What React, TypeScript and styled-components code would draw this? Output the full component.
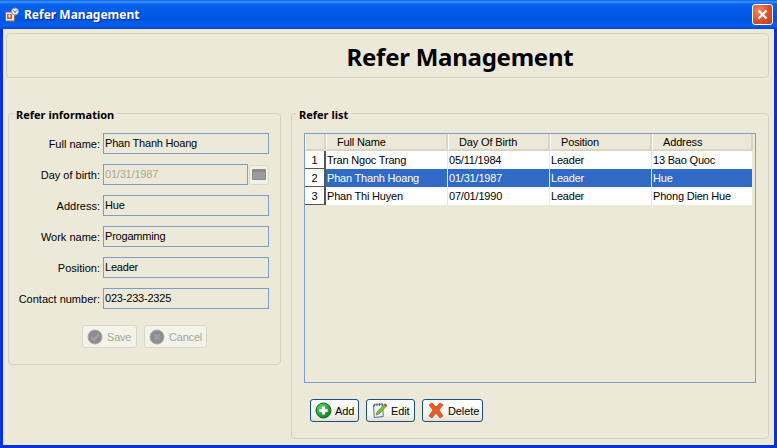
import React from "react";
import styled, { createGlobalStyle } from "styled-components";

const Global = createGlobalStyle`
  html, body { margin: 0; padding: 0; background: #ece9d8; }
  body { width: 777px; height: 448px; overflow: hidden; font-family: "Liberation Sans", Arial, sans-serif; font-size: 11px; color: #000; }
  * { box-sizing: border-box; }
`;

const Window = styled.div`
  width: 777px; height: 448px; display: flex; flex-direction: column;
  background: #0831d9;
`;
const TitleBar = styled.div`
  height: 29px; flex: none; display: flex; align-items: center; padding: 0 4px 0 5px; gap: 5px;
  background: linear-gradient(180deg, #0a5be0 0%, #3f93fb 6%, #0a63ee 14%, #0058e6 45%, #0055de 70%, #0060f2 88%, #0046c8 100%);
`;
const TitleText = styled.span`
  flex: 1; color: #fff; font-family: "Noto Sans", sans-serif; font-size: 12px; font-weight: 700; line-height: 14px;
  text-shadow: 1px 1px 0 #0a2f9a;
`;
const CloseButton = styled.div`
  width: 21px; height: 21px; border: 1px solid #fff; border-radius: 3px; display: flex; align-items: center; justify-content: center;
  background: radial-gradient(circle at 30% 30%, #ee8a6c, #d8502c 55%, #b83a18);
`;
const Frame = styled.div`
  flex: 1; margin: 0 3px 3px 3px; background: #ece9d8; padding: 4px 5px 7px 3px;
  display: flex; flex-direction: column; min-height: 0;
`;
const Banner = styled.div`
  height: 45px; flex: none; border: 1px solid #d4d1bf; border-radius: 4px; display: flex; align-items: center; justify-content: center;
  padding: 2px 0 0 145px;
`;
const Heading = styled.h1`
  margin: 0; font-family: "Noto Sans", sans-serif; font-size: 24px; font-weight: 700; line-height: 30px; letter-spacing: -0.25px;
`;
const Columns = styled.div`
  flex: 1; display: grid; grid-template-columns: 273px 478px; column-gap: 10px; padding: 35px 0 0 2px; align-items: start; min-height: 0;
`;
const Group = styled.section<{ $h: number }>`
  position: relative; height: ${p => p.$h}px; border: 1px solid #d4d1bf; border-radius: 4px;
`;
const Legend = styled.div`
  position: absolute; left: 4px; top: -6px; padding: 0 3px 0 3px; background: #ece9d8; font-family: "Noto Sans", sans-serif; font-weight: 700; font-size: 11px; line-height: 13px;
`;
const Form = styled.div`
  display: flex; flex-direction: column; gap: 10px; padding: 19px 11px 0 0;
`;
const Row = styled.div`
  display: flex; align-items: center; gap: 3px;
`;
const Label = styled.label`
  width: 91px; text-align: right; font-size: 11px; white-space: nowrap;
`;
const Field = styled.div<{ $off?: boolean }>`
  flex: 1; height: 21px; border: 1px solid #7b9dc9; padding: 0 1px; line-height: 18px; font-size: 11px; letter-spacing: -0.2px;
  color: ${p => (p.$off ? "#a9a793" : "#000")};
`;
const CalButton = styled.div`
  width: 20px; height: 20px; margin-left: -2px; border: 1px solid #dcdacb; border-radius: 3px; background: #f3f1e6; display: flex; align-items: center; justify-content: center;
`;
const Actions = styled.div`
  display: flex; justify-content: flex-start; gap: 7px; padding: 16px 0 0 73px;
`;
const DisabledButton = styled.div<{ $w: number }>`
  width: ${p => p.$w}px; height: 23px; display: flex; align-items: center; gap: 4px; padding-left: 4px; color: #a6a596; font-size: 11px; letter-spacing: -0.2px;
  background: #f4f3ea; border: 1px solid #d8d6c8; border-radius: 3px;
`;
const Table = styled.div`
  margin: 19px 12px 0 12px; height: 250px; border: 1px solid #7b9dc9; background: #ece9d8;
`;
const Cols = `21px 122px 102px 102px 101px`;
const HeaderRow = styled.div`
  display: grid; grid-template-columns: ${Cols}; height: 17px;
`;
const HeaderCell = styled.div<{ $pad: number }>`
  border-left: 1px solid #fff; border-right: 2px solid #d8d5c4; border-bottom: 2px solid #d8d5c4; padding: 1px 0 0 ${p => p.$pad}px; line-height: 14px; font-size: 11px; letter-spacing: -0.15px;
  background: #ebe8d7;
`;
const DataRow = styled.div`
  display: grid; grid-template-columns: ${Cols}; height: 18px; width: 448px;
`;
const RowNumber = styled.div`
  background: #fff; border-right: 2px solid #555; border-bottom: 1px solid #555; padding-top: 1px; text-align: center; line-height: 16px; font-size: 11px;
`;
const Cell = styled.div<{ $sel?: boolean }>`
  background: ${p => (p.$sel ? "#316ac5" : "#fff")}; color: ${p => (p.$sel ? "#fff" : "#000")};
  border-right: 1px solid #ece9d8; padding: 1px 0 0 1px; line-height: 16px; font-size: 11px; letter-spacing: -0.2px; white-space: nowrap; overflow: hidden;
`;
const Toolbar = styled.div`
  display: flex; gap: 7px; padding: 16px 0 0 18px;
`;
const ToolButton = styled.div<{ $w: number }>`
  width: ${p => p.$w}px; height: 23px; display: flex; align-items: center; gap: 3px; padding-left: 4px; font-size: 11px; letter-spacing: -0.1px;
  background: linear-gradient(180deg, #fff 0%, #f5f4ea 70%, #e4e1d2 100%); border: 1px solid #1c4f85; border-radius: 3px;
`;

const AppIcon = () => (
  <svg width="14" height="16" viewBox="0 0 14 16" style={{ flex: "none" }}>
    <rect x="0.5" y="5" width="9" height="9" fill="#f4e6d8" stroke="#7a6f70" />
    <rect x="2" y="7" width="5" height="5" fill="#e05a3a" />
    <path d="M3 9h3M4.5 7.5v3" stroke="#fff" />
    <circle cx="10" cy="4.5" r="3.5" fill="#e6eef8" stroke="#8098b8" />
    <path d="M8.5 3.5L10 5.5 11.5 3.5" stroke="#3a5a90" fill="none" />
  </svg>
);
const GrayCheck = () => (
  <svg width="16" height="16" viewBox="0 0 16 16">
    <circle cx="8" cy="8" r="7" fill="#8c8c8c" stroke="#a8a8a8" />
    <path d="M4.5 8.5L7 11l5-6" stroke="#a4a4a4" strokeWidth="2" fill="none" />
  </svg>
);
const GrayCross = () => (
  <svg width="16" height="16" viewBox="0 0 16 16">
    <circle cx="8" cy="8" r="7" fill="#8c8c8c" stroke="#a8a8a8" />
    <path d="M5 5l6 6M11 5l-6 6" stroke="#9e9e9e" strokeWidth="2" />
  </svg>
);
const AddIcon = () => (
  <svg width="17" height="17" viewBox="0 0 17 17">
    <defs>
      <radialGradient id="addBall" cx="35%" cy="30%" r="80%">
        <stop offset="0%" stopColor="#58d86a" />
        <stop offset="100%" stopColor="#0c7a20" />
      </radialGradient>
    </defs>
    <circle cx="8.5" cy="8.5" r="7.5" fill="url(#addBall)" stroke="#0c6a1e" />
    <path d="M8.5 4.5v8M4.5 8.5h8" stroke="#fff" strokeWidth="3" />
  </svg>
);
const EditIcon = () => (
  <svg width="17" height="17" viewBox="0 0 17 17">
    <path d="M2.5 3l9-1 .8 12.5-9 1z" fill="#eef3f8" stroke="#5c6f8c" />
    <path d="M3.5 1.5v3M6 1.2v3M8.5 1v3M11 .8v3" stroke="#5c6f8c" />
    <path d="M5 13l1-3 7-7.5 2 2-7 7.5z" fill="#7cc03a" stroke="#4f8a20" strokeWidth="0.7" />
    <path d="M13.5 2l2 2" stroke="#d8352a" strokeWidth="1.8" />
  </svg>
);
const DeleteIcon = () => (
  <svg width="18" height="17" viewBox="0 0 18 17">
    <path d="M2 3l3-2 4 4 4-4 3 2-4 5 4 6-3 2-4-5-4 5-3-2 4-6z" fill="#ec5a26" stroke="#c23c14" strokeWidth="0.7" />
  </svg>
);
const CalendarIcon = () => (
  <svg width="14" height="11" viewBox="0 0 14 11">
    <rect width="14" height="11" rx="1" fill="#8a8a8a" />
    <rect x="1" y="3" width="12" height="7" fill="#9c9c9c" />
  </svg>
);

const fields: [string, string][] = [
  ["Full name:", "Phan Thanh Hoang"],
  ["Address:", "Hue"],
  ["Work name:", "Progamming"],
  ["Position:", "Leader"],
  ["Contact number:", "023-233-2325"],
];
const people = [
  ["Tran Ngoc Trang", "05/11/1984", "Leader", "13 Bao Quoc"],
  ["Phan Thanh Hoang", "01/31/1987", "Leader", "Hue"],
  ["Phan Thi Huyen", "07/01/1990", "Leader", "Phong Dien Hue"],
];
const heads: [string, number][] = [["", 0], ["Full Name", 10], ["Day Of Birth", 10], ["Position", 10], ["Address", 10]];

export default function App() {
  return (
    <Window>
      <Global />
      <TitleBar>
        <AppIcon />
        <TitleText>Refer Management</TitleText>
        <CloseButton>
          <svg width="11" height="11" viewBox="0 0 11 11"><path d="M1.5 1.5l8 8M9.5 1.5l-8 8" stroke="#fff" strokeWidth="2.2" /></svg>
        </CloseButton>
      </TitleBar>
      <Frame>
        <Banner><Heading>Refer Management</Heading></Banner>
        <Columns>
          <Group $h={252}>
            <Legend>Refer information</Legend>
            <Form>
              <Row><Label>{fields[0][0]}</Label><Field>{fields[0][1]}</Field></Row>
              <Row><Label>Day of birth:</Label><Field $off>01/31/1987</Field><CalButton><CalendarIcon /></CalButton></Row>
              {fields.slice(1).map(([l, v]) => (
                <Row key={l}><Label>{l}</Label><Field>{v}</Field></Row>
              ))}
            </Form>
            <Actions>
              <DisabledButton $w={55}><GrayCheck />Save</DisabledButton>
              <DisabledButton $w={63}><GrayCross />Cancel</DisabledButton>
            </Actions>
          </Group>
          <Group $h={326}>
            <Legend>Refer list</Legend>
            <Table>
              <HeaderRow>
                {heads.map(([h, pad], i) => <HeaderCell key={i} $pad={pad}>{h}</HeaderCell>)}
              </HeaderRow>
              {people.map((p, i) => (
                <DataRow key={i}>
                  <RowNumber>{i + 1}</RowNumber>
                  {p.map((c, j) => <Cell key={j} $sel={i === 1}>{c}</Cell>)}
                </DataRow>
              ))}
            </Table>
            <Toolbar>
              <ToolButton $w={49}><AddIcon />Add</ToolButton>
              <ToolButton $w={49}><EditIcon />Edit</ToolButton>
              <ToolButton $w={61}><DeleteIcon />Delete</ToolButton>
            </Toolbar>
          </Group>
        </Columns>
      </Frame>
    </Window>
  );
}
